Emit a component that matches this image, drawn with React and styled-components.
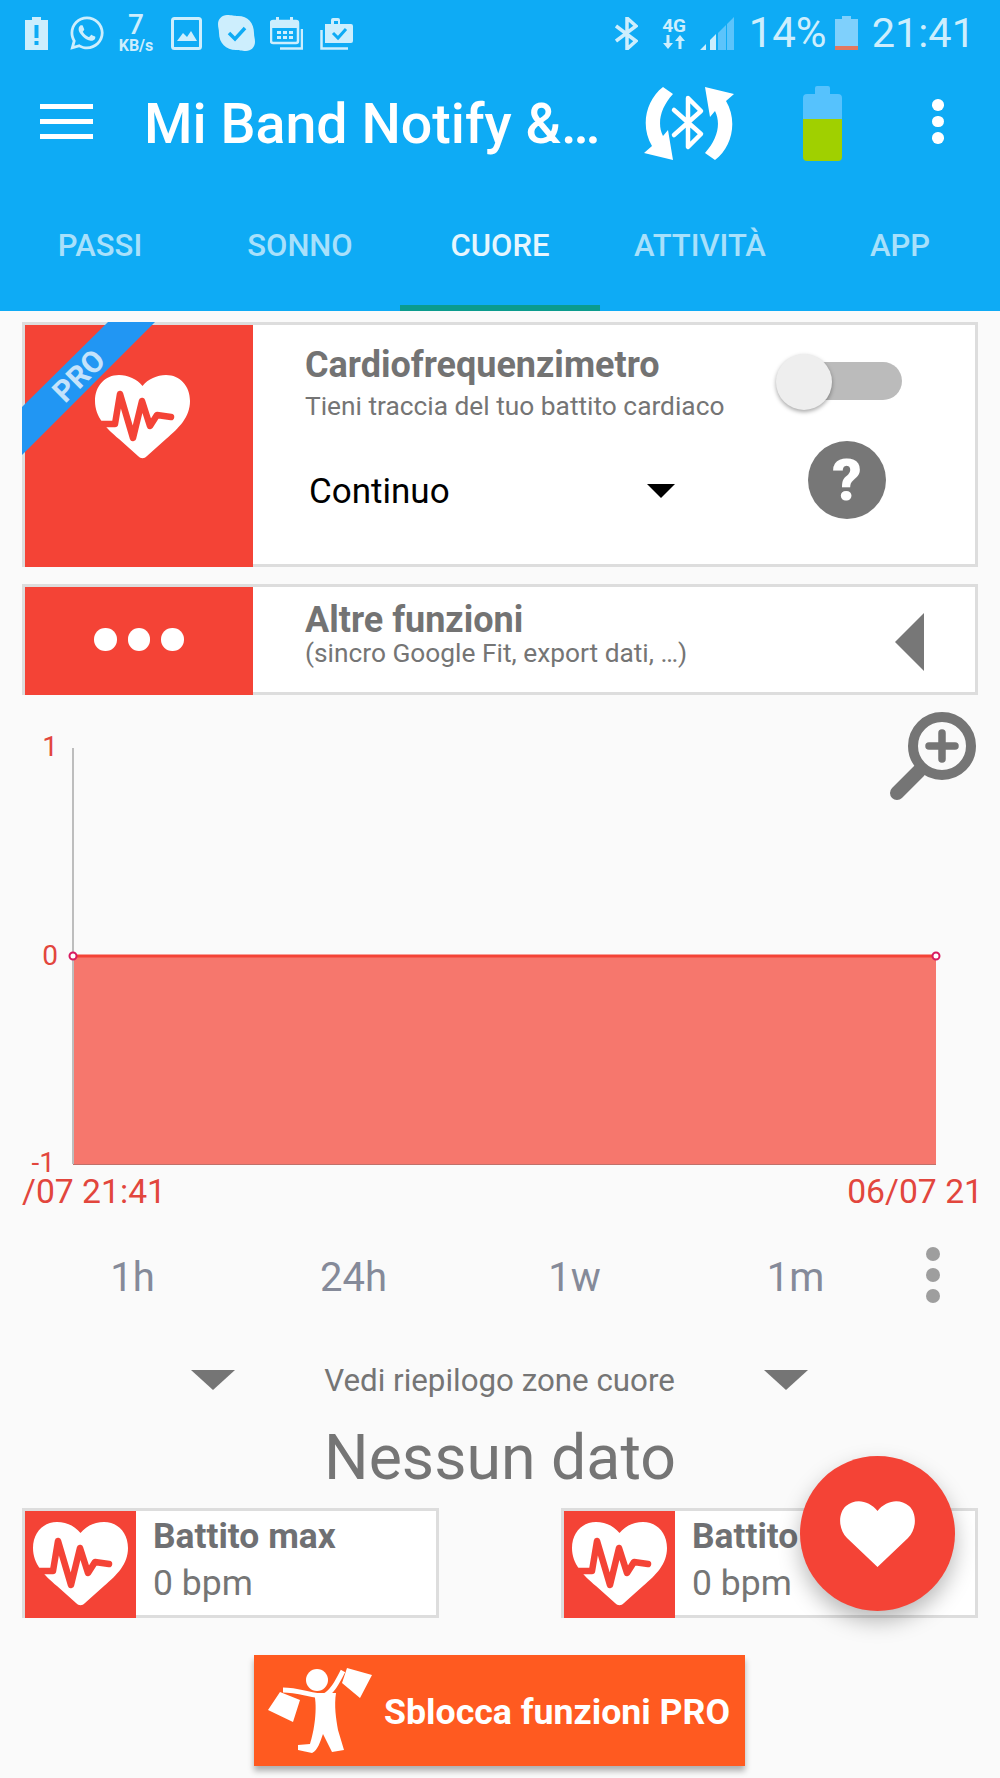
import { createGlobalStyle } from 'styled-components';
import styled from 'styled-components';
import { FaWhatsapp } from 'react-icons/fa';

const GlobalStyle = createGlobalStyle`
  html, body {
    margin: 0;
    padding: 0;
    background: #fafafa;
  }
  body {
    font-family: Roboto, "Liberation Sans", sans-serif;
  }
`;

const Page = styled.div`
  position: relative;
  width: 1000px;
  height: 1778px;
  overflow: hidden;
  background: #fafafa;
`;

const Header = styled.header`
  height: 311px;
  background: #0eabf5;
  display: flex;
  flex-direction: column;
`;

const StatusBar = styled.div`
  height: 66px;
  display: flex;
  align-items: center;
  justify-content: space-between;
  padding: 0 25px 0 25px;
  color: #cdeefd;
`;

const StatusGroup = styled.div`
  display: flex;
  align-items: center;
`;

const StatusSvg = styled.svg`
  display: block;
  flex: none;
  margin-left: ${({ $ml }) => $ml || 0}px;
`;

const WhatsApp = styled(FaWhatsapp)`
  display: block;
  margin-left: 20px;
  width: 38px;
  height: 38px;
`;

const Speed = styled.div`
  width: 38px;
  margin-left: 11px;
  display: flex;
  flex-direction: column;
  align-items: center;
`;

const SpeedValue = styled.span`
  font-size: 28px;
  font-weight: 500;
  line-height: 24px;
`;

const SpeedUnit = styled.span`
  font-size: 16px;
  font-weight: 700;
  line-height: 15px;
  margin-top: 1px;
`;

const Network = styled.div`
  width: 27px;
  margin-left: 23px;
  display: flex;
  flex-direction: column;
  align-items: center;
`;

const NetworkLabel = styled.span`
  font-size: 19px;
  font-weight: 700;
  line-height: 17px;
`;

const StatusText = styled.span`
  font-size: ${({ $size }) => $size}px;
  line-height: 40px;
  margin-left: ${({ $ml }) => $ml}px;
`;

const Toolbar = styled.div`
  height: 114px;
  display: flex;
  align-items: center;
  padding-left: 40px;
`;

const Hamburger = styled.div`
  width: 53px;
  height: 35px;
  margin-right: 51px;
  display: flex;
  flex-direction: column;
  justify-content: space-between;
  margin-bottom: 4px;
`;

const HamburgerLine = styled.span`
  display: block;
  height: 5px;
  background: #fff;
`;

const Title = styled.div`
  width: 454px;
  margin-top: 3px;
  color: #fff;
  font-size: 55.5px;
  font-weight: 500;
  line-height: 64px;
  white-space: nowrap;
`;

const SyncIcon = styled.svg`
  flex: none;
  margin-left: 45px;
`;

const BatteryIcon = styled.svg`
  flex: none;
  margin-left: 68px;
`;

const MenuDots = styled.div`
  margin-left: 90px;
  display: flex;
  flex-direction: column;
  gap: 5px;
  margin-bottom: 3px;
`;

const MenuDot = styled.span`
  width: 11.5px;
  height: 11.5px;
  border-radius: 50%;
  background: #fff;
`;

const Tabs = styled.nav`
  flex: 1;
  display: flex;
`;

const Tab = styled.div`
  width: 200px;
  display: flex;
  align-items: center;
  justify-content: center;
  font-size: 31px;
  font-weight: 500;
  color: ${({ $active }) => ($active ? '#e6f6fe' : '#a8e0fb')};
  border-bottom: 6px solid ${({ $active }) => ($active ? '#0b9b8d' : 'transparent')};
  box-sizing: border-box;
  padding-top: 6px;
`;

const Main = styled.main`
  padding: 11px 22px 0;
`;

const Card = styled.section`
  position: relative;
  box-sizing: border-box;
  height: ${({ $h }) => $h}px;
  background: #fff;
  border: 3px solid #ddd;
  display: flex;
  margin-bottom: 17px;
`;

const RedPanel = styled.div`
  position: relative;
  flex: none;
  width: 228px;
  margin-bottom: -3px;
  background: #f44336;
  display: flex;
  justify-content: ${({ $center }) => ($center ? 'center' : 'flex-start')};
  align-items: ${({ $center }) => ($center ? 'center' : 'flex-start')};
`;

const Ribbon = styled.svg`
  position: absolute;
  left: -3px;
  top: -3px;
`;

const ProLabel = styled.span`
  position: absolute;
  left: 14px;
  top: 35px;
  width: 80px;
  text-align: center;
  transform: rotate(-45deg);
  font-size: 30px;
  font-weight: 700;
  line-height: 32px;
  color: #c4e3fb;
`;

const PanelHeart = styled.svg`
  display: block;
  margin: 50px 0 0 70px;
`;

const Dots = styled.div`
  display: flex;
  gap: 11px;
  margin-bottom: 3px;
`;

const Dot = styled.span`
  width: 22.5px;
  height: 22.5px;
  border-radius: 50%;
  background: #fff;
`;

const CardLeft = styled.div`
  box-sizing: border-box;
  width: 422px;
  padding: ${({ $top }) => $top}px 0 0 52px;
`;

const CardTitle = styled.div`
  font-size: 36px;
  font-weight: 700;
  line-height: 40px;
  color: #737373;
  white-space: nowrap;
`;

const CardSub = styled.div`
  font-size: 26.3px;
  line-height: ${({ $lh }) => $lh}px;
  margin-top: ${({ $mt }) => $mt}px;
  color: #757575;
  white-space: nowrap;
`;

const SelectRow = styled.div`
  display: flex;
  align-items: center;
  justify-content: space-between;
  height: 50px;
  margin: 43px 0 0 4px;
`;

const SelectValue = styled.span`
  font-size: 35px;
  color: #000;
`;

const SelectArrow = styled.span`
  width: 0;
  height: 0;
  border-left: 14px solid transparent;
  border-right: 14px solid transparent;
  border-top: 14px solid #000;
`;

const CardRight = styled.div`
  margin-left: 100px;
  padding-top: 29px;
  display: flex;
  flex-direction: column;
`;

const Switch = styled.div`
  position: relative;
  width: 127px;
  height: 56px;
  display: flex;
  align-items: center;
  justify-content: flex-end;
`;

const SwitchTrack = styled.span`
  width: 102px;
  height: 38px;
  margin-top: -2px;
  border-radius: 19px;
  background: #bbb;
`;

const SwitchThumb = styled.span`
  position: absolute;
  left: 1px;
  top: 0;
  width: 56px;
  height: 56px;
  border-radius: 50%;
  background: #eee;
  box-shadow: 0 2px 4px rgba(0, 0, 0, 0.35);
`;

const HelpButton = styled.div`
  width: 78px;
  height: 78px;
  margin: 31px 0 0 33px;
  border-radius: 50%;
  background: #777;
  color: #fff;
  font-size: 58px;
  font-weight: 900;
  line-height: 78px;
  text-align: center;
`;

const CollapseArrow = styled.span`
  position: absolute;
  right: 51px;
  top: 26px;
  width: 0;
  height: 0;
  border-top: 29px solid transparent;
  border-bottom: 29px solid transparent;
  border-right: 29px solid #777;
`;

const Chart = styled.div`
  position: relative;
  margin: 0 -22px;
  height: 517px;
  margin-top: -17px;
`;

const ChartSvg = styled.svg`
  display: block;
`;

const ZoomIcon = styled.svg`
  position: absolute;
  left: 888px;
  top: 17px;
`;

const RangeRow = styled.div`
  display: flex;
  align-items: center;
  height: 130px;
`;

const RangeItem = styled.span`
  width: 221px;
  text-align: center;
  font-size: 40px;
  color: #858a99;
`;

const RangeMore = styled.div`
  margin-left: 20px;
  display: flex;
  flex-direction: column;
  gap: 7px;
  margin-top: -5px;
`;

const RangeDot = styled.span`
  width: 14px;
  height: 14px;
  border-radius: 50%;
  background: #9e9e9e;
`;

const SummaryRow = styled.div`
  display: flex;
  align-items: center;
  justify-content: space-between;
  height: 76px;
  padding: 0 170px 0 169px;
`;

const SummaryArrow = styled.span`
  width: 0;
  height: 0;
  border-left: 22px solid transparent;
  border-right: 22px solid transparent;
  border-top: 20px solid #757575;
`;

const SummaryText = styled.span`
  font-size: 31.3px;
  color: #757575;
`;

const NoData = styled.div`
  height: 76px;
  padding-top: 2px;
  margin-bottom: -2px;
  line-height: 76px;
  text-align: center;
  font-size: 62.6px;
  color: #757575;
`;

const StatsRow = styled.div`
  display: flex;
  justify-content: space-between;
  margin-top: 14px;
`;

const StatCard = styled.div`
  box-sizing: border-box;
  width: 417px;
  height: 110px;
  background: #fff;
  border: 3px solid #ddd;
  display: flex;
`;

const StatIcon = styled.div`
  flex: none;
  width: 111px;
  margin-bottom: -3px;
  background: #f44336;
  display: flex;
  align-items: center;
  justify-content: center;
`;

const StatText = styled.div`
  padding: 3px 0 0 17px;
`;

const StatTitle = styled.div`
  font-size: 35.4px;
  font-weight: 700;
  line-height: 44px;
  color: #6f7073;
`;

const StatValue = styled.div`
  font-size: 35.5px;
  line-height: 44px;
  margin-top: 3px;
  color: #757575;
`;

const PromoButton = styled.div`
  box-sizing: border-box;
  width: 491px;
  height: 111px;
  margin: 37px 0 0 232px;
  padding: 2px 0 0 14px;
  background: #ff5a20;
  box-shadow: 0 5px 6px rgba(0, 0, 0, 0.3);
  display: flex;
  align-items: center;
  color: #fff;
  font-size: 35.7px;
  font-weight: 700;
`;

const PromoIcon = styled.svg`
  flex: none;
  margin: -2px 11px 0 0;
`;

const Fab = styled.div`
  position: absolute;
  left: 800px;
  top: 1456px;
  width: 155px;
  height: 155px;
  border-radius: 50%;
  background: #f44336;
  box-shadow: 0 10px 22px rgba(0, 0, 0, 0.28);
  display: flex;
  align-items: center;
  justify-content: center;
`;

const HeartPulse = ({ as: Comp = 'svg', ...props }) => (
  <Comp width="95" height="85" viewBox="0 0 95 85" {...props}>
    <path
      d="M24 0C33 0 42 4 47.5 11C53 4 62 0 71 0C85 0 95 11 95 26C95 42 84 53 71 64L52 81C49 84 46 84 43 81L24 64C11 53 0 42 0 26C0 11 10 0 24 0Z"
      fill="#fff"
    />
    <path
      d="M-3 49H20L25 19L38 63L47 26L55 51L62 40L76 42"
      fill="none"
      stroke="#f44336"
      strokeWidth="6.5"
      strokeLinecap="round"
      strokeLinejoin="round"
    />
  </Comp>
);

const App = () => (
  <Page>
    <GlobalStyle />
    <Header>
      <StatusBar>
        <StatusGroup>
          <StatusSvg width="23" height="33" viewBox="0 0 23 33">
            <path d="M7 0h9v3h7v30H0V3h7z" fill="currentColor" />
            <path d="M9.5 8h4v13h-4zM9.5 24h4v4h-4z" fill="#0eabf5" />
          </StatusSvg>
          <WhatsApp />
          <Speed>
            <SpeedValue>7</SpeedValue>
            <SpeedUnit>KB/s</SpeedUnit>
          </Speed>
          <StatusSvg $ml={16} width="31" height="33" viewBox="0 0 31 33">
            <rect x="1.5" y="1.5" width="28" height="30" rx="2" fill="none" stroke="currentColor" strokeWidth="3" />
            <path d="M6 24l6-8 4 4 4-6 6 10z" fill="currentColor" />
          </StatusSvg>
          <StatusSvg $ml={16} width="37" height="36" viewBox="0 0 37 36">
            <path d="M9 0C14 0 16 1 20 1C30 1 36 8 36 18C36 22 37 23 37 27C37 32 33 36 28 36C23 36 22 35 18 35C8 35 1 28 1 18C1 14 0 13 0 9C0 4 4 0 9 0Z" fill="currentColor" />
            <path d="M11 18l6 6 10-11" fill="none" stroke="#0eabf5" strokeWidth="3.5" />
          </StatusSvg>
          <StatusSvg $ml={15} width="33" height="33" viewBox="0 0 33 33">
            <rect x="1" y="4" width="27" height="22" rx="2" fill="none" stroke="currentColor" strokeWidth="2.5" />
            <path d="M1 4h27v7H1zM6 0h3v5H6zM20 0h3v5h-3z" fill="currentColor" />
            <path d="M7 14h4v3H7zM13 14h4v3h-4zM19 14h4v3h-4zM7 19h4v3H7zM13 19h4v3h-4zM19 19h4v3h-4z" fill="currentColor" />
            <path d="M32 12v19.5H10" fill="none" stroke="currentColor" strokeWidth="2.5" />
          </StatusSvg>
          <StatusSvg $ml={17} width="33" height="33" viewBox="0 0 33 33">
            <path d="M5 7h6V3a2 2 0 0 1 2-2h5a2 2 0 0 1 2 2v4h11a2 2 0 0 1 2 2v15a2 2 0 0 1-2 2H5z" fill="currentColor" />
            <path d="M14 4h4v3h-4z" fill="#0eabf5" />
            <path d="M13 16l5 5 8-9" fill="none" stroke="#0eabf5" strokeWidth="3" />
            <path d="M1.5 13v18.5H28" fill="none" stroke="currentColor" strokeWidth="2.5" />
          </StatusSvg>
        </StatusGroup>
        <StatusGroup>
          <StatusSvg width="23" height="33" viewBox="0 0 23 33">
            <path d="M1 9l20 15-9 8V1l9 8L1 24" fill="none" stroke="currentColor" strokeWidth="3.5" />
          </StatusSvg>
          <Network>
            <NetworkLabel>4G</NetworkLabel>
            <StatusSvg width="22" height="16" viewBox="0 0 22 16">
              <path d="M3.5 1h3v8H10l-5 6-5-6h3.500zM15.500 15h3V7H22l-5-6-5 6h3.500z" fill="currentColor" />
            </StatusSvg>
          </Network>
          <StatusSvg $ml={12} width="34" height="33" viewBox="0 0 34 33">
            <path d="M18 16l8-8v25h-8zM27 7l7-7v33h-7z" fill="#5cc4fb" />
            <path d="M0 33l6-6v6zM10 23l6-6v16h-6z" fill="currentColor" />
          </StatusSvg>
          <StatusText $size={42} $ml={15}>14%</StatusText>
          <StatusSvg $ml={8} width="23" height="34" viewBox="0 0 23 34">
            <path d="M7 0h9v3h7v27H0V3h7z" fill="#7fd0fc" />
            <path d="M0 30h23v4H0z" fill="#e2785f" />
          </StatusSvg>
          <StatusText $size={41.5} $ml={14}>21:41</StatusText>
        </StatusGroup>
      </StatusBar>
      <Toolbar>
        <Hamburger>
          <HamburgerLine />
          <HamburgerLine />
          <HamburgerLine />
        </Hamburger>
        <Title>Mi Band Notify &amp;…</Title>
        <SyncIcon width="92" height="75" viewBox="0 0 92 75">
          <g fill="#fff">
            <path d="M20 1C3 14-3 40 9 60L1 67L30 74L25 44L20 50C14 38 17 22 30 8Z" />
            <path d="M20 1C3 14-3 40 9 60L1 67L30 74L25 44L20 50C14 38 17 22 30 8Z" transform="rotate(180 46 37.5)" />
          </g>
          <path d="M31 24L58 48L45 61V12L58 25L31 49" fill="none" stroke="#fff" strokeWidth="4.500" strokeLinejoin="round" strokeLinecap="round" />
        </SyncIcon>
        <BatteryIcon width="39" height="75" viewBox="0 0 39 75">
          <path d="M12 2a2 2 0 0 1 2-2h11a2 2 0 0 1 2 2v6h8a4 4 0 0 1 4 4v22H0V12a4 4 0 0 1 4-4h8z" fill="#56c2fd" />
          <path d="M0 33h39v38a4 4 0 0 1-4 4H4a4 4 0 0 1-4-4z" fill="#a0d000" />
        </BatteryIcon>
        <MenuDots>
          <MenuDot />
          <MenuDot />
          <MenuDot />
        </MenuDots>
      </Toolbar>
      <Tabs>
        <Tab>PASSI</Tab>
        <Tab>SONNO</Tab>
        <Tab $active>CUORE</Tab>
        <Tab>ATTIVITÀ</Tab>
        <Tab>APP</Tab>
      </Tabs>
    </Header>
    <Main>
      <Card $h={245}>
        <RedPanel>
          <PanelHeart as={HeartPulse} />
          <Ribbon width="136" height="136" viewBox="0 0 136 136">
            <path d="M86 0H133L0 133V85Z" fill="#2196f3" />
          </Ribbon>
          <ProLabel>PRO</ProLabel>
        </RedPanel>
        <CardLeft $top={20}>
          <CardTitle>Cardiofrequenzimetro</CardTitle>
          <CardSub $lh={34} $mt={4}>Tieni traccia del tuo battito cardiaco</CardSub>
          <SelectRow>
            <SelectValue>Continuo</SelectValue>
            <SelectArrow />
          </SelectRow>
        </CardLeft>
        <CardRight>
          <Switch>
            <SwitchTrack />
            <SwitchThumb />
          </Switch>
          <HelpButton>?</HelpButton>
        </CardRight>
      </Card>
      <Card $h={111}>
        <RedPanel $center>
          <Dots>
            <Dot />
            <Dot />
            <Dot />
          </Dots>
        </RedPanel>
        <CardLeft $top={13}>
          <CardTitle>Altre funzioni</CardTitle>
          <CardSub $lh={30} $mt={-2}>(sincro Google Fit, export dati, …)</CardSub>
        </CardLeft>
        <CollapseArrow />
      </Card>
      <Chart>
        <ChartSvg width="1000" height="517" viewBox="0 695 1000 517">
          <rect x="73" y="956" width="863" height="208" fill="#f6776d" />
          <path d="M73 1164.500H936" stroke="#c0706a" strokeWidth="1" />
          <path d="M73 748V1164" stroke="#bdbdbd" strokeWidth="2" />
          <path d="M73 956H936" stroke="#f44336" strokeWidth="3" />
          <circle cx="73" cy="956" r="3.500" fill="#fff" stroke="#d81b60" strokeWidth="2" />
          <circle cx="936" cy="956" r="3.500" fill="#fff" stroke="#d81b60" strokeWidth="2" />
          <g fill="#e2463d" fontFamily="Roboto, sans-serif">
            <text x="58" y="756" fontSize="28" textAnchor="end">1</text>
            <text x="58" y="965" fontSize="28" textAnchor="end">0</text>
            <text x="55" y="1172" fontSize="28" textAnchor="end">-1</text>
            <text x="22" y="1203" fontSize="33.700">/07 21:41</text>
            <text x="983" y="1203" fontSize="33.700" textAnchor="end">06/07 21</text>
          </g>
        </ChartSvg>
        <ZoomIcon width="90" height="92" viewBox="0 0 90 92">
          <circle cx="54" cy="34" r="29" fill="none" stroke="#757575" strokeWidth="10" />
          <path d="M54 21V47M41 34H67" stroke="#757575" strokeWidth="7.500" strokeLinecap="round" />
          <path d="M31 59L9 81" stroke="#757575" strokeWidth="14" strokeLinecap="round" />
        </ZoomIcon>
      </Chart>
      <RangeRow>
        <RangeItem>1h</RangeItem>
        <RangeItem>24h</RangeItem>
        <RangeItem>1w</RangeItem>
        <RangeItem>1m</RangeItem>
        <RangeMore>
          <RangeDot />
          <RangeDot />
          <RangeDot />
        </RangeMore>
      </RangeRow>
      <SummaryRow>
        <SummaryArrow />
        <SummaryText>Vedi riepilogo zone cuore</SummaryText>
        <SummaryArrow />
      </SummaryRow>
      <NoData>Nessun dato</NoData>
      <StatsRow>
        <StatCard>
          <StatIcon><HeartPulse /></StatIcon>
          <StatText>
            <StatTitle>Battito max</StatTitle>
            <StatValue>0 bpm</StatValue>
          </StatText>
        </StatCard>
        <StatCard>
          <StatIcon><HeartPulse /></StatIcon>
          <StatText>
            <StatTitle>Battito min</StatTitle>
            <StatValue>0 bpm</StatValue>
          </StatText>
        </StatCard>
      </StatsRow>
      <PromoButton>
        <PromoIcon width="105" height="89" viewBox="0 0 105 89">
          <circle cx="49" cy="14" r="11" fill="#fff" />
          <path d="M12 26L0 44L25 56L32 34ZM79 2L104 9L92 32L74 17Z" fill="#fff" />
          <path d="M15 24C30 24 45 30 56 30C65 26 70 14 75 5" fill="none" stroke="#fff" strokeWidth="5" />
          <path d="M46 27L68 27C66 40 68 52 70 64L76 84L64 86L55 68C52 76 50 84 44 87L30 84L30 79L42 78C46 66 50 42 46 27Z" fill="#fff" />
        </PromoIcon>
        Sblocca funzioni PRO
      </PromoButton>
    </Main>
    <Fab>
      <svg width="75" height="66" viewBox="0 0 75 66">
        <path d="M37.500 66L7 37C-2 28-2 12 6 5C15-3 29-1 37.500 10C46-1 60-3 69 5C77 12 77 28 68 37Z" fill="#fff" />
      </svg>
    </Fab>
  </Page>
);

export default App;
